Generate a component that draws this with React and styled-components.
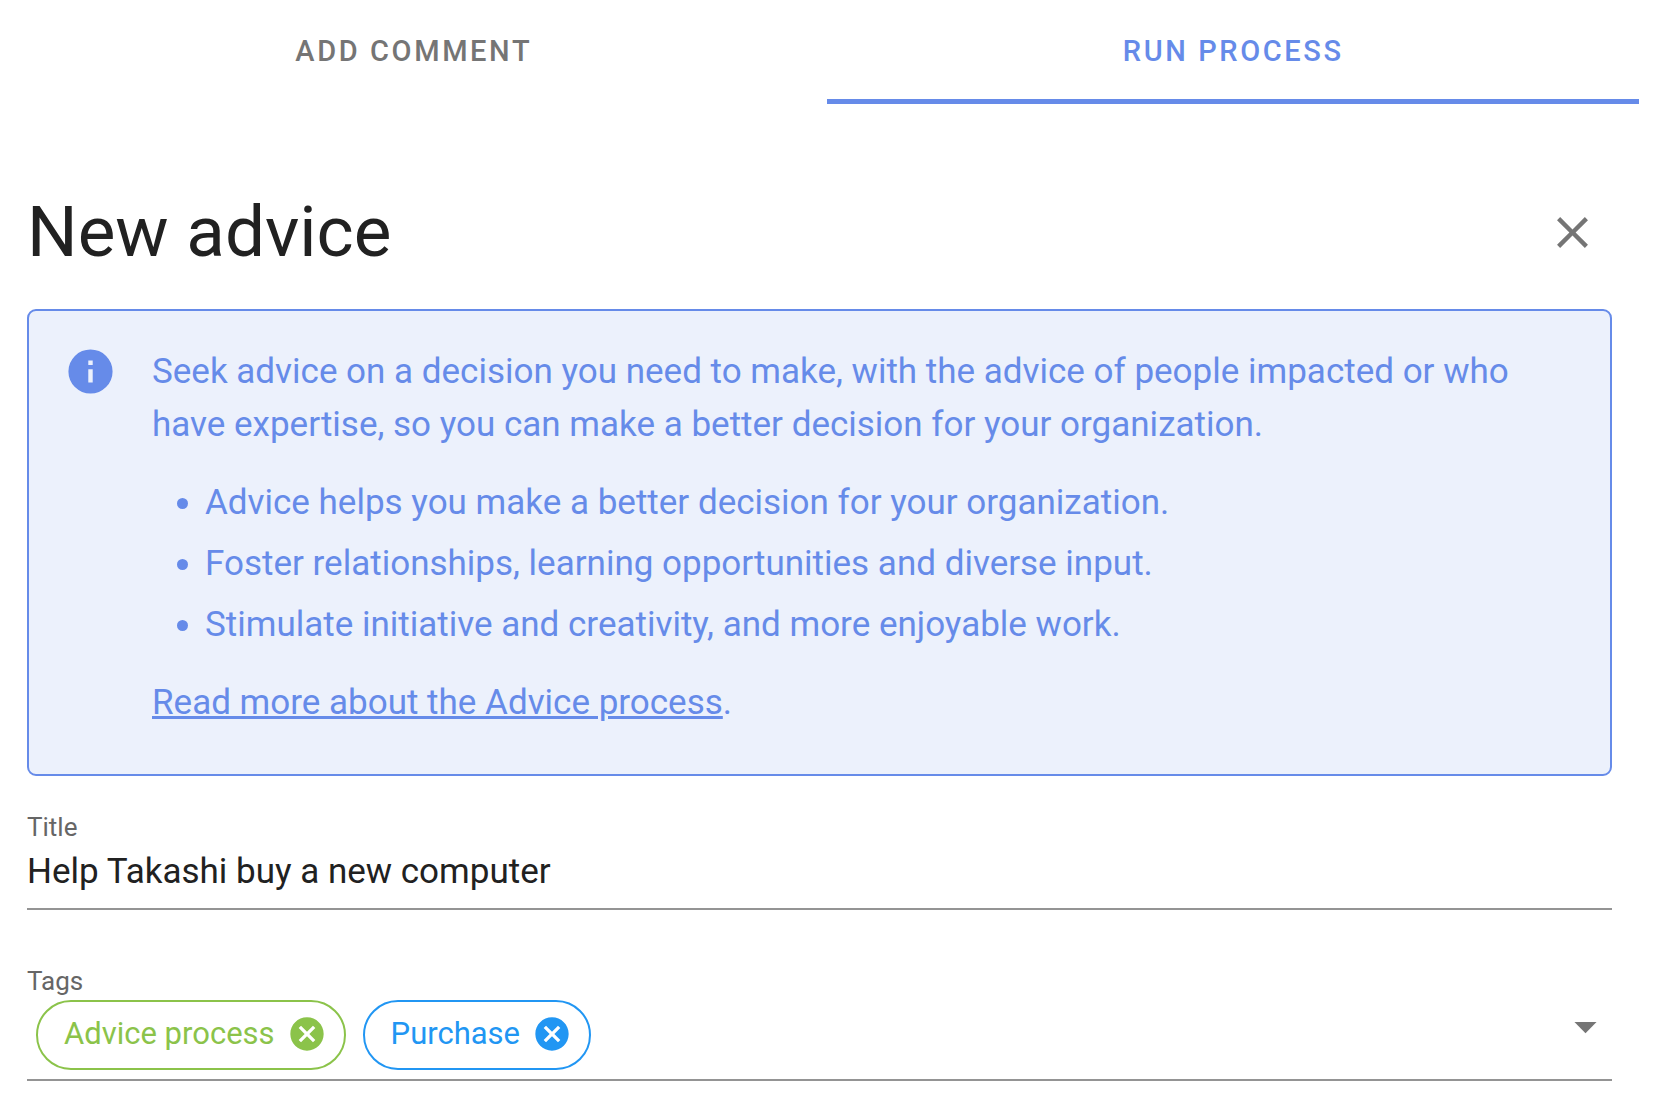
import React, { useState } from "react";
import styled, { createGlobalStyle } from "styled-components";

const color = {
  primary: "#668be9",
  primaryTint: "#ecf1fc",
  text: "#212121",
  label: "#666666",
  muted: "#757575",
  line: "#949494",
  green: "#8bc34a",
  blue: "#2196f3",
};

const GlobalStyle = createGlobalStyle`
  *, *::before, *::after { box-sizing: border-box; }
  body {
    margin: 0;
    background: #fff;
    color: ${color.text};
    font-family: Roboto, "Liberation Sans", sans-serif;
    font-size: 35px;
    line-height: 53px;
  }
  button, input { font: inherit; color: inherit; letter-spacing: inherit; }
`;

const Page = styled.div`
  display: flex;
  flex-direction: column;
`;

const TabList = styled.div`
  display: flex;
  margin-right: 23px;
`;

const Tab = styled.button`
  flex: 1 1 auto;
  padding: 33px 35px 30px;
  border: 0;
  border-bottom: 5px solid ${(p) => (p.$active ? color.primary : "transparent")};
  background: none;
  color: ${(p) => (p.$active ? color.primary : color.muted)};
  font-size: 29px;
  font-weight: 500;
  line-height: 36px;
  letter-spacing: 0.09em;
  text-transform: uppercase;
  cursor: pointer;
`;

const Panel = styled.form`
  display: flex;
  flex-direction: column;
  padding: 88px 50px 27px 27px;
`;

const Header = styled.header`
  display: flex;
  align-items: center;
  justify-content: space-between;
  margin-bottom: 37px;
`;

const Heading = styled.h1`
  margin: 0;
  font-size: 71px;
  font-weight: 400;
  line-height: 80px;
`;

const IconButton = styled.button`
  display: flex;
  align-items: center;
  justify-content: center;
  width: ${(p) => p.$size}px;
  height: ${(p) => p.$size}px;
  flex: none;
  padding: 0;
  border: 0;
  border-radius: 50%;
  background: none;
  color: ${(p) => (p.$inherit ? "inherit" : color.muted)};
  cursor: pointer;
`;

const Svg = styled.svg`
  display: block;
  flex: none;
  fill: currentColor;
`;

const Notice = styled.section`
  display: flex;
  gap: 35px;
  padding: 34px 35px 45px;
  border: 2px solid ${color.primary};
  border-radius: 9px;
  background: ${color.primaryTint};
  color: ${color.primary};
`;

const NoticeBody = styled.div`
  display: flex;
  flex: 1;
  flex-direction: column;
  gap: 25px;
`;

const Paragraph = styled.p`
  margin: 0;
`;

const BulletList = styled.ul`
  display: flex;
  flex-direction: column;
  gap: 8px;
  margin: 0;
  padding-left: 53px;
`;

const Link = styled.a`
  color: inherit;
  text-decoration: underline;
`;

const Field = styled.div`
  display: flex;
  flex-direction: column;
  margin-top: ${(p) => p.$gap}px;
  border-bottom: 2px solid ${color.line};
`;

const Label = styled.label`
  color: ${color.label};
  font-size: 26px;
  line-height: 30px;
`;

const TextInput = styled.input`
  width: 100%;
  height: 53px;
  margin: 3px 0 10px;
  padding: 0;
  border: 0;
  outline: 0;
  background: none;
`;

const TagRow = styled.div`
  display: flex;
  align-items: flex-start;
  gap: 17px;
  padding: 4px 0 9px 9px;
`;

const Chip = styled.span`
  display: flex;
  align-items: center;
  gap: 12px;
  height: 70px;
  padding: 0 17px 2px 26px;
  border: 2px solid ${(p) => p.$color};
  border-radius: 35px;
  color: ${(p) => p.$color};
  font-size: 31px;
  line-height: 44px;
`;

const TagInput = styled.input`
  flex: 1;
  min-width: 0;
  height: 70px;
  padding: 0;
  border: 0;
  outline: 0;
  background: none;
`;

const paths = {
  close:
    "M19,6.41L17.59,5L12,10.59L6.41,5L5,6.41L10.59,12L5,17.59L6.41,19L12,13.41L17.59,19L19,17.59L13.41,12L19,6.41Z",
  info: "M13,9H11V7H13M13,17H11V11H13M12,2A10,10 0 0,0 2,12A10,10 0 0,0 12,22A10,10 0 0,0 22,12A10,10 0 0,0 12,2Z",
  cancel:
    "M12,2C17.53,2 22,6.47 22,12C22,17.53 17.53,22 12,22C6.47,22 2,17.53 2,12C2,6.47 6.47,2 12,2M15.59,7L12,10.59L8.41,7L7,8.41L10.59,12L7,15.59L8.41,17L12,13.41L15.59,17L17,15.59L13.41,12L17,8.41L15.59,7Z",
  menuDown: "M7,10L12,15L17,10H7Z",
};

function Icon({ name, size }) {
  return (
    <Svg viewBox="0 0 24 24" width={size} height={size} aria-hidden="true">
      <path d={paths[name]} />
    </Svg>
  );
}

const tabs = ["Add comment", "Run process"];

const benefits = [
  "Advice helps you make a better decision for your organization.",
  "Foster relationships, learning opportunities and diverse input.",
  "Stimulate initiative and creativity, and more enjoyable work.",
];

const initialTags = [
  { name: "Advice process", color: color.green },
  { name: "Purchase", color: color.blue },
];

export default function App() {
  const [active, setActive] = useState("Run process");
  const [title, setTitle] = useState("Help Takashi buy a new computer");
  const [tags, setTags] = useState(initialTags);

  return (
    <Page>
      <GlobalStyle />
      <TabList role="tablist">
        {tabs.map((tab) => (
          <Tab
            key={tab}
            type="button"
            role="tab"
            aria-selected={tab === active}
            $active={tab === active}
            onClick={() => setActive(tab)}
          >
            {tab}
          </Tab>
        ))}
      </TabList>
      <Panel onSubmit={(e) => e.preventDefault()}>
        <Header>
          <Heading>New advice</Heading>
          <IconButton type="button" $size={80} aria-label="Close">
            <Icon name="close" size={53} />
          </IconButton>
        </Header>
        <Notice>
          <Icon name="info" size={53} />
          <NoticeBody>
            <Paragraph>
              Seek advice on a decision you need to make, with the advice of people impacted or who
              have expertise, so you can make a better decision for your organization.
            </Paragraph>
            <BulletList>
              {benefits.map((benefit) => (
                <li key={benefit}>{benefit}</li>
              ))}
            </BulletList>
            <Paragraph>
              <Link href="#advice-process">Read more about the Advice process</Link>.
            </Paragraph>
          </NoticeBody>
        </Notice>
        <Field $gap={36}>
          <Label htmlFor="title">Title</Label>
          <TextInput id="title" value={title} onChange={(e) => setTitle(e.target.value)} />
        </Field>
        <Field $gap={56}>
          <Label htmlFor="tags">Tags</Label>
          <TagRow>
            {tags.map((tag) => (
              <Chip key={tag.name} $color={tag.color}>
                {tag.name}
                <IconButton
                  type="button"
                  $size={40}
                  $inherit
                  aria-label={`Remove ${tag.name}`}
                  onClick={() => setTags(tags.filter((t) => t !== tag))}
                >
                  <Icon name="cancel" size={40} />
                </IconButton>
              </Chip>
            ))}
            <TagInput id="tags" />
            <IconButton type="button" $size={53} aria-label="Show tags">
              <Icon name="menuDown" size={53} />
            </IconButton>
          </TagRow>
        </Field>
      </Panel>
    </Page>
  );
}
